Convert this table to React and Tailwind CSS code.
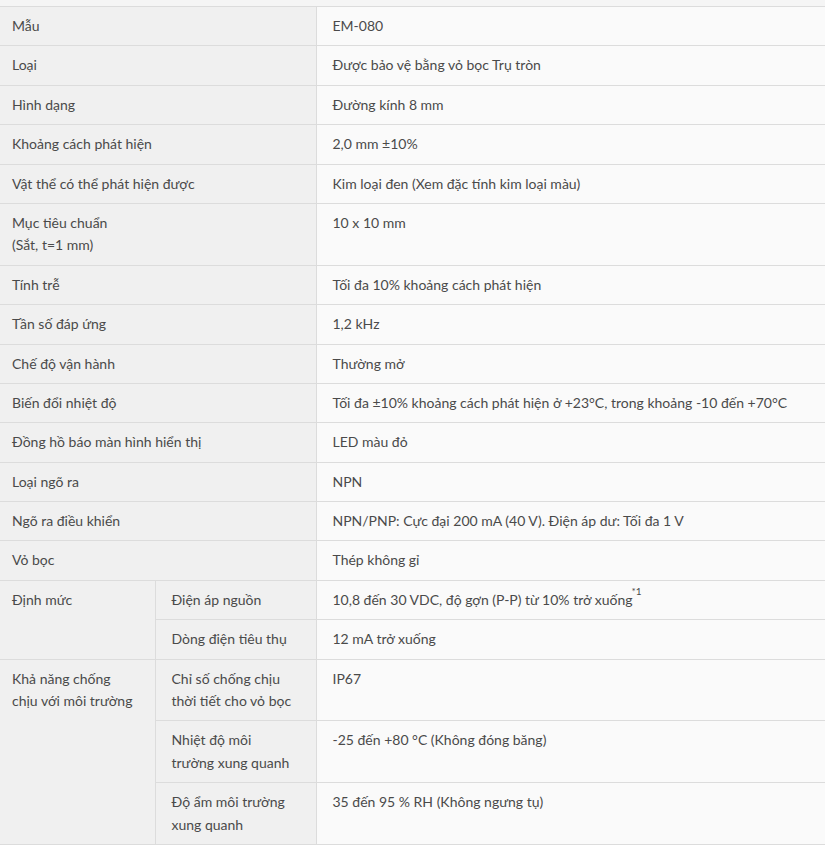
import React from 'react'

const rows = [
  { label: 'Mẫu', value: 'EM-080' },
  { label: 'Loại', value: 'Được bảo vệ bằng vỏ bọc Trụ tròn' },
  { label: 'Hình dạng', value: 'Đường kính 8 mm' },
  { label: 'Khoảng cách phát hiện', value: '2,0 mm ±10%' },
  { label: 'Vật thể có thể phát hiện được', value: 'Kim loại đen (Xem đặc tính kim loại màu)' },
  { label: <>Mục tiêu chuẩn<br />(Sắt, t=1 mm)</>, value: '10 x 10 mm' },
  { label: 'Tính trễ', value: 'Tối đa 10% khoảng cách phát hiện' },
  { label: 'Tần số đáp ứng', value: '1,2 kHz' },
  { label: 'Chế độ vận hành', value: 'Thường mở' },
  { label: 'Biến đổi nhiệt độ', value: 'Tối đa ±10% khoảng cách phát hiện ở +23°C, trong khoảng -10 đến +70°C' },
  { label: 'Đồng hồ báo màn hình hiển thị', value: 'LED màu đỏ' },
  { label: 'Loại ngõ ra', value: 'NPN' },
  { label: 'Ngõ ra điều khiển', value: 'NPN/PNP: Cực đại 200 mA (40 V). Điện áp dư: Tối đa 1 V' },
  { label: 'Vỏ bọc', value: 'Thép không gỉ' },
]

const groups = [
  {
    label: 'Định mức',
    items: [
      { label: 'Điện áp nguồn', value: <>10,8 đến 30 VDC, độ gợn (P-P) từ 10% trở xuống<sup className="text-[10px] align-[5px] leading-none ml-[-1px]">*1</sup></> },
      { label: 'Dòng điện tiêu thụ', value: '12 mA trở xuống' },
    ],
  },
  {
    label: <>Khả năng chống<br />chịu với môi trường</>,
    items: [
      { label: <>Chỉ số chống chịu<br />thời tiết cho vỏ bọc</>, value: 'IP67' },
      { label: <>Nhiệt độ môi<br />trường xung quanh</>, value: '-25 đến +80 °C (Không đóng băng)' },
      { label: <>Độ ẩm môi trường<br />xung quanh</>, value: '35 đến 95 % RH (Không ngưng tụ)' },
    ],
  },
]

const th = 'align-top text-left font-normal bg-[#f0f0f0] border-b border-[#dcdcdc] py-2'
const td = 'align-top bg-[#fafafa] border-b border-l border-[#dcdcdc] py-2 pl-4 pr-3'

export default function App() {
  return (
    <div className="w-[825px] h-[846px] overflow-hidden bg-white text-[14px] leading-[1.6] text-[#4a4a4a]" style={{ fontFamily: '"Lato", "Noto Sans", sans-serif' }}>
      <div className="h-[7px] bg-[#f5f5f5] border-b border-[#dcdcdc]" />
      <table className="w-full border-collapse table-fixed">
        <colgroup>
          <col className="w-[155px]" />
          <col className="w-[161px]" />
          <col />
        </colgroup>
        <tbody>
          {rows.map((r, i) => (
            <tr key={i}>
              <th colSpan={2} className={`${th} pl-3 pr-3`}>{r.label}</th>
              <td className={td}>{r.value}</td>
            </tr>
          ))}
          {groups.map((g, gi) =>
            g.items.map((it, ii) => (
              <tr key={`${gi}-${ii}`}>
                {ii === 0 && (
                  <th rowSpan={g.items.length} className={`${th} pl-3 pr-2`}>{g.label}</th>
                )}
                <th className={`${th} border-l border-[#dcdcdc] pl-4 pr-2`}>{it.label}</th>
                <td className={td}>{it.value}</td>
              </tr>
            ))
          )}
        </tbody>
      </table>
    </div>
  )
}
